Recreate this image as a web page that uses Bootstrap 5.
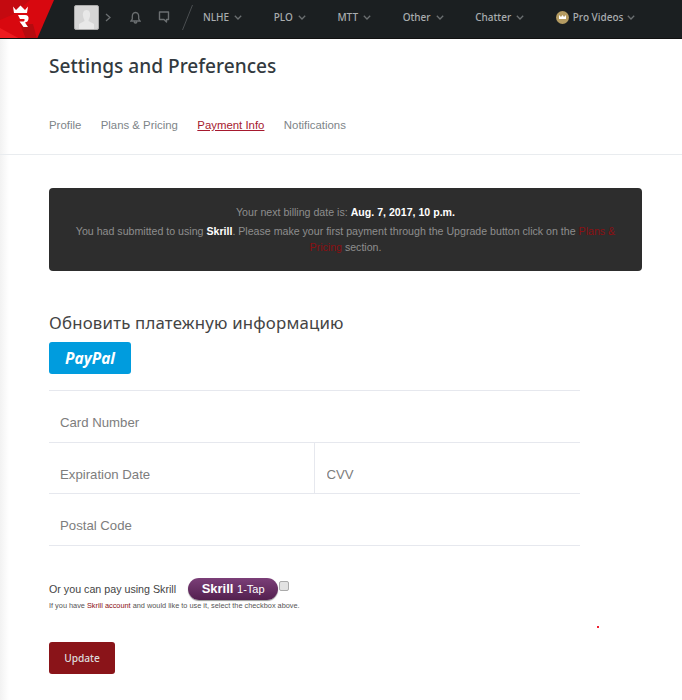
<!DOCTYPE html>
<html lang="en">
<head>
    <meta charset="UTF-8">
    <meta name="viewport" content="width=device-width, initial-scale=1.0">
    <link href="https://cdn.jsdelivr.net/npm/bootstrap@5.3.0/dist/css/bootstrap.min.css" rel="stylesheet">
    <title>Settings and Preferences</title>
    <style>
        body { font-family: "Liberation Sans", Arial, sans-serif; background: #fff; color: #333; }
        .top-bar { height: 39px; padding-bottom: 4px; background: #1b1f21; border-bottom: 1px solid #111; overflow: hidden; }
        .top-logo { width: 54px; height: 39px; flex: none; align-self: flex-start; }
        .top-avatar { width: 25px; height: 25px; margin-left: 20px; background: #d5d5d5; border: 1px solid #aaa; border-radius: 2px; flex: none; }
        .top-ico { flex: none; display: block; }
        .ico-arrow { margin-left: 6px; }
        .ico-bell { margin-left: 19px; }
        .ico-chat { margin-left: 17px; }
        .ico-slash { margin-left: 12px; }
        .top-link { font-family: "Noto Sans", sans-serif; font-size: 10px; font-weight: 500; color: #a9adaf; text-decoration: none; display: flex; align-items: center; gap: 5px; flex: none; margin-left: 31.6px; }
        .top-link.link-nlhe { margin-left: 10px; }
        .link-pro { gap: 4px; }
        .pro-badge { width: 13px; height: 13px; border-radius: 50%; background: #b49b62; display: flex; align-items: center; justify-content: center; }
        .page-wrap { background: linear-gradient(to right, #f2f2f2 0, #fff 9px); position: relative; height: 661px; }
        .page-head { padding: 14px 0 0 49px; height: 116px; border-bottom: 1px solid #e9ecef; }
        .page-title { font-family: "Noto Sans", sans-serif; font-size: 19.1px; font-weight: 500; color: #333a40; line-height: 26px; margin: 0 0 36px; }
        .tab-row { gap: 19.4px; font-size: 11.4px; line-height: 20px; }
        .tab-row a { color: #7d8488; text-decoration: none; }
        .tab-row a.tab-on { color: #a6192e; text-decoration: underline; }
        .bill-box { margin: 33px 40px 0 49px; height: 83px; background: #2d2d2d; border-radius: 4px; padding: 16px 20px 0; text-align: center; color: #8d8d8d; font-size: 10.62px; line-height: 16px; }
        .bill-box p { margin: 0 0 3px; }
        .bill-box b { color: #fff; }
        .bill-box a { color: #8b0f12; text-decoration: none; }
        .pay-head { font-family: "Noto Sans", sans-serif; font-weight: 400; font-size: 16.8px; letter-spacing: .2px; line-height: 22px; color: #444; margin: 41px 0 8px 49px; }
        .paypal-btn { display: block; width: 82px; height: 32px; margin-left: 49px; padding: 0; border: 0; background: #009cde; border-radius: 3px; color: #fff; font-family: "Open Sans", sans-serif; font-size: 15.5px; font-weight: 700; font-style: italic; line-height: 32px; }
        .card-form { width: 531px; margin: 16px 0 0 49px; border-top: 1px solid #e6e8ee; }
        .card-line { height: 51.67px; border-bottom: 1px solid #e6e8ee; display: flex; }
        .card-input { flex: 1 1 0; min-width: 0; border: 0; outline: 0; background: transparent; padding: 13px 11px 0; font-family: "Liberation Sans", sans-serif; font-size: 13.2px; color: #333; }
        .card-input::placeholder { color: #7d7d7d; opacity: 1; }
        .card-input + .card-input { border-left: 1px solid #e6e8ee; padding-left: 12px; }
        .skrill-row { margin: 32px 0 0 49px; font-size: 10.7px; line-height: 22px; color: #444; }
        .skrill-tag { width: 90px; height: 22px; margin-left: 12px; border-radius: 11px; background: linear-gradient(#7b3f78, #53204f); color: #fff; font-size: 13px; font-weight: 700; line-height: 22px; text-align: center; box-shadow: 0 1px 1px #999; }
        .skrill-tag span { font-weight: 400; font-size: 11px; }
        .skrill-check { appearance: none; width: 10px; height: 10px; margin: 0 0 6px 1px; background: #e2e2e2; border: 1px solid #aaa; border-radius: 2px; }
        .skrill-note { margin: 1px 0 0 49px; font-size: 7.35px; line-height: 10px; color: #555; }
        .skrill-note a { color: #8b0f12; text-decoration: none; }
        .update-btn { display: block; width: 66px; height: 32px; margin: 31px 0 0 49px; padding: 1px 0 0; border: 0; border-radius: 3px; background: #8a1419; color: #ddd; font-family: "Noto Sans", sans-serif; font-size: 10.2px; font-weight: 500; }
        .stray-dot { position: absolute; left: 597px; top: 587px; width: 2px; height: 2px; background: #f02030; }
    </style>
</head>
<body>

    <nav class="top-bar d-flex align-items-center">
        <svg class="top-logo" viewBox="0 0 54 39">
            <polygon points="0,0 54,0 37,39 0,39" fill="#d8080f"/>
            <polygon points="0,28 20,39 0,39" fill="#ee1a1f"/>
            <polygon points="0,0 30,0 14,14 0,20" fill="#c40a10"/>
            <polygon points="20,24 33,24 37,39 26,39" fill="#b50b0f"/>
            <polygon points="13,6.5 16,10 20.500,5.500 25,10 28,6.500 27,13 14,13" fill="#fff"/>
            <path d="M18 15 H25 Q29 15 28.500 19 Q28 22 25 22.500 L28 27 H23.500 L19.500 21.500 H23.500 Q25 21 24.500 19 H20 Z" fill="#fff"/>
        </svg>
        <div class="top-avatar d-flex align-items-end justify-content-center overflow-hidden">
            <svg width="19" height="21" viewBox="0 0 19 21"><path d="M9.500 2 C12.500 2 13.500 5 13 8 C12.700 10 11.500 11.500 11.500 13 L17 16 V21 H2 V16 L7.500 13 C7.500 11.500 6.300 10 6 8 C5.500 5 6.500 2 9.500 2 Z" fill="#e8e8e8"/></svg>
        </div>
        <svg class="top-ico ico-arrow" width="6" height="9" viewBox="0 0 6 9"><path d="M1 1 L5 4.500 L1 8" fill="none" stroke="#6b6f71" stroke-width="1.300"/></svg>
        <svg class="top-ico ico-bell" width="11" height="13" viewBox="0 0 11 13"><path d="M5.500 1.500 C3 1.500 2.300 3.500 2.300 5.500 V8 L1 10 H10 L8.700 8 V5.500 C8.700 3.500 8 1.500 5.500 1.500 Z M4 11 Q5.500 13 7 11" fill="none" stroke="#6b6f71" stroke-width="1.300"/></svg>
        <svg class="top-ico ico-chat" width="12" height="12" viewBox="0 0 12 12"><path d="M1.500 1 H10.500 V8.500 H8.500 V11 L6 8.500 H1.500 Z" fill="none" stroke="#6b6f71" stroke-width="1.400" stroke-linejoin="round"/></svg>
        <svg class="top-ico ico-slash" width="11" height="25" viewBox="0 0 11 25"><path d="M10.500 0 L0.500 25" stroke="#4a4e50" stroke-width="1"/></svg>
        <a class="top-link link-nlhe" href="#">NLHE <svg width="8" height="5" viewBox="0 0 8 5"><path d="M.8 .8 L4 4 L7.200 .8" fill="none" stroke="#6b6f71" stroke-width="1.300"/></svg></a>
        <a class="top-link" href="#">PLO <svg width="8" height="5" viewBox="0 0 8 5"><path d="M.8 .8 L4 4 L7.200 .8" fill="none" stroke="#6b6f71" stroke-width="1.300"/></svg></a>
        <a class="top-link" href="#">MTT <svg width="8" height="5" viewBox="0 0 8 5"><path d="M.8 .8 L4 4 L7.200 .8" fill="none" stroke="#6b6f71" stroke-width="1.300"/></svg></a>
        <a class="top-link" href="#">Other <svg width="8" height="5" viewBox="0 0 8 5"><path d="M.8 .8 L4 4 L7.200 .8" fill="none" stroke="#6b6f71" stroke-width="1.300"/></svg></a>
        <a class="top-link" href="#">Chatter <svg width="8" height="5" viewBox="0 0 8 5"><path d="M.8 .8 L4 4 L7.200 .8" fill="none" stroke="#6b6f71" stroke-width="1.300"/></svg></a>
        <a class="top-link link-pro" href="#">
            <span class="pro-badge"><svg width="7" height="5" viewBox="0 0 7 5"><path d="M0 0 L2 2 L3.500 0 L5 2 L7 0 V4 H0 Z" fill="#fff"/></svg></span>
            Pro Videos <svg width="8" height="5" viewBox="0 0 8 5"><path d="M.8 .8 L4 4 L7.200 .8" fill="none" stroke="#6b6f71" stroke-width="1.300"/></svg>
        </a>
    </nav>

    <div class="page-wrap">
        <div class="page-head">
            <h1 class="page-title">Settings and Preferences</h1>
            <div class="tab-row d-flex">
                <a href="#">Profile</a>
                <a href="#">Plans &amp; Pricing</a>
                <a href="#" class="tab-on">Payment Info</a>
                <a href="#">Notifications</a>
            </div>
        </div>

        <div class="bill-box">
            <p>Your next billing date is: <b>Aug. 7, 2017, 10 p.m.</b></p>
            <p>You had submitted to using <b>Skrill</b>. Please make your first payment through the Upgrade button click on the <a href="#">Plans &amp; Pricing</a> section.</p>
        </div>

        <h2 class="pay-head">Обновить платежную информацию</h2>
        <button class="paypal-btn" type="button">PayPal</button>

        <form class="card-form">
            <div class="card-line"><input class="card-input" type="text" placeholder="Card Number"></div>
            <div class="card-line"><input class="card-input" type="text" placeholder="Expiration Date"><input class="card-input" type="text" placeholder="CVV"></div>
            <div class="card-line"><input class="card-input" type="text" placeholder="Postal Code"></div>
        </form>

        <div class="skrill-row d-flex align-items-center">
            <span>Or you can pay using Skrill</span>
            <span class="skrill-tag">Skrill <span>1-Tap</span></span>
            <input class="skrill-check" type="checkbox">
        </div>
        <p class="skrill-note">If you have <a href="#">Skrill account</a> and would like to use it, select the checkbox above.</p>

        <button class="update-btn" type="button">Update</button>
        <span class="stray-dot"></span>
    </div>

</body>
</html>
